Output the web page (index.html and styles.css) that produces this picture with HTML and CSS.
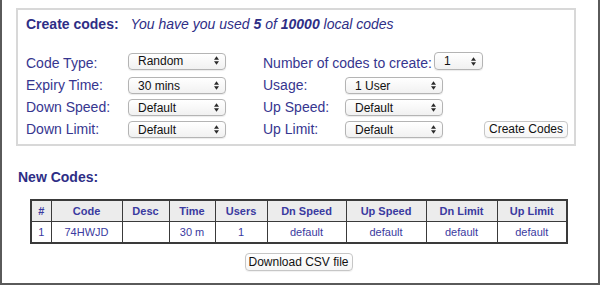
FILE: index.html
```html
<!DOCTYPE html>
<html lang="en">
<head>
  <meta charset="UTF-8">
  <title>Create codes</title>
  <link rel="stylesheet" href="styles.css">
</head>
<body>
  <div class="frame">
    <!-- Create codes form -->
    <form class="create-box">
      <div class="title">
        <b>Create codes:</b>
        <i>You have you used <b>5</b> of <b>10000</b> local codes</i>
      </div>

      <div class="row row-first">
        <div class="half">
          <label class="label">Code Type:</label>
          <span class="select"><select><option>Random</option></select><svg viewBox="0 0 6 10"><path d="M3 0L6 4H0z M3 10L0 6H6z"/></svg></span>
        </div>
        <div class="half">
          <label class="label-auto">Number of codes to create:</label>
          <span class="select select-small"><select><option>1</option></select><svg viewBox="0 0 6 10"><path d="M3 0L6 4H0z M3 10L0 6H6z"/></svg></span>
        </div>
      </div>

      <div class="row">
        <div class="half">
          <label class="label">Expiry Time:</label>
          <span class="select"><select><option>30 mins</option></select><svg viewBox="0 0 6 10"><path d="M3 0L6 4H0z M3 10L0 6H6z"/></svg></span>
        </div>
        <div class="half">
          <label class="label label-right">Usage:</label>
          <span class="select"><select><option>1 User</option></select><svg viewBox="0 0 6 10"><path d="M3 0L6 4H0z M3 10L0 6H6z"/></svg></span>
        </div>
      </div>

      <div class="row">
        <div class="half">
          <label class="label">Down Speed:</label>
          <span class="select"><select><option>Default</option></select><svg viewBox="0 0 6 10"><path d="M3 0L6 4H0z M3 10L0 6H6z"/></svg></span>
        </div>
        <div class="half">
          <label class="label label-right">Up Speed:</label>
          <span class="select"><select><option>Default</option></select><svg viewBox="0 0 6 10"><path d="M3 0L6 4H0z M3 10L0 6H6z"/></svg></span>
        </div>
      </div>

      <div class="row">
        <div class="half">
          <label class="label">Down Limit:</label>
          <span class="select"><select><option>Default</option></select><svg viewBox="0 0 6 10"><path d="M3 0L6 4H0z M3 10L0 6H6z"/></svg></span>
        </div>
        <div class="half">
          <label class="label label-right">Up Limit:</label>
          <span class="select"><select><option>Default</option></select><svg viewBox="0 0 6 10"><path d="M3 0L6 4H0z M3 10L0 6H6z"/></svg></span>
          <button type="button" class="btn btn-create">Create Codes</button>
        </div>
      </div>
    </form>
    <!-- End Create codes form -->

    <h2 class="new-title">New Codes:</h2>

    <div class="codes">
      <table class="codes-table">
        <colgroup>
          <col style="width:20px"><col style="width:71px"><col style="width:47px">
          <col style="width:46px"><col style="width:52px"><col style="width:79px">
          <col style="width:80px"><col style="width:71px"><col style="width:70px">
        </colgroup>
        <tr>
          <th>#</th><th>Code</th><th>Desc</th><th>Time</th><th>Users</th>
          <th>Dn Speed</th><th>Up Speed</th><th>Dn Limit</th><th>Up Limit</th>
        </tr>
        <tr>
          <td>1</td><td>74HWJD</td><td></td><td>30 m</td><td>1</td>
          <td>default</td><td>default</td><td>default</td><td>default</td>
        </tr>
      </table>
      <button type="button" class="btn btn-csv">Download CSV file</button>
    </div>
  </div>
</body>
</html>
```

FILE: styles.css
```css
body {
  margin: 0;
  font-family: 'Liberation Sans', Arial, Helvetica, sans-serif;
  color: #36368f;
  background: #fff;
}

.frame {
  height: 285px;
  box-sizing: border-box;
  border: 2px solid #5a5a5a;
  border-top: none;
  padding: 8px 0 0 14px;
}

/* Create box */
.create-box {
  width: 560px;
  box-sizing: border-box;
  border: 2px solid #d8d8d8;
  padding: 4px 0 4px 8px;
  margin: 0;
}
.title {
  font-size: 14px;
  line-height: 20px;
  color: #2e2e86;
  margin-bottom: 18px;
  white-space: nowrap;
}
.title i {
  margin-left: 8px;
}
.row {
  display: flex;
  align-items: center;
  height: 22px;
  font-size: 14px;
}
.row-first .half {
  align-items: flex-start;
}
.row-first .label,
.row-first .label-auto {
  line-height: 22px;
}
.half {
  display: flex;
  align-items: center;
  height: 22px;
  flex-shrink: 0;
}
.half:first-child {
  width: 237px;
}
.label {
  width: 102px;
}
.label-right {
  width: 82px;
}
.label-auto {
  margin-right: 2px;
}

.select {
  position: relative;
  display: inline-block;
  width: 98px;
  height: 17px;
}
.select-small {
  width: 49px;
  height: 18px;
}
.select select {
  -webkit-appearance: none;
  appearance: none;
  width: 100%;
  height: 100%;
  box-sizing: border-box;
  border: 1px solid #b4b4b4;
  border-radius: 4px;
  background: linear-gradient(#ffffff, #f1f1f1);
  font-family: 'Liberation Sans', Arial, sans-serif;
  font-size: 12px;
  color: #111;
  padding: 0 0 0 9px;
  margin: 0;
  box-shadow: 0 1px 1px rgba(0, 0, 0, 0.08);
}
.select svg {
  position: absolute;
  right: 7px;
  top: 50%;
  width: 5px;
  height: 9px;
  margin-top: -4.5px;
  fill: #2a2a2a;
  pointer-events: none;
}

.btn {
  font-family: 'Liberation Sans', Arial, sans-serif;
  font-size: 12px;
  color: #111;
  background: linear-gradient(#ffffff, #f6f6f6);
  border: 1px solid #c6c6c6;
  border-radius: 4px;
  box-shadow: 0 1px 1px rgba(0, 0, 0, 0.06);
  padding: 0;
  height: 17px;
  cursor: pointer;
}
.btn-create {
  width: 84px;
  margin-left: 41px;
}

/* New codes */
.new-title {
  font-size: 14px;
  line-height: 20px;
  color: #2e2e86;
  margin: 21px 0 12px 2px;
}
.codes {
  width: 537px;
  margin-left: 14px;
  text-align: center;
}
.codes-table {
  width: 537px;
  table-layout: fixed;
  border-collapse: collapse;
  border: 2px solid #3a3a3a;
  font-size: 11px;
  color: #3a3aa0;
}
.codes-table th,
.codes-table td {
  border: 1px solid #3a3a3a;
  height: 20px;
  padding: 0;
  text-align: center;
}
.codes-table th {
  background-color: #ececec;
  font-weight: bold;
}
.btn-csv {
  width: 108px;
  height: 18px;
  margin-top: 9px;
}
```
